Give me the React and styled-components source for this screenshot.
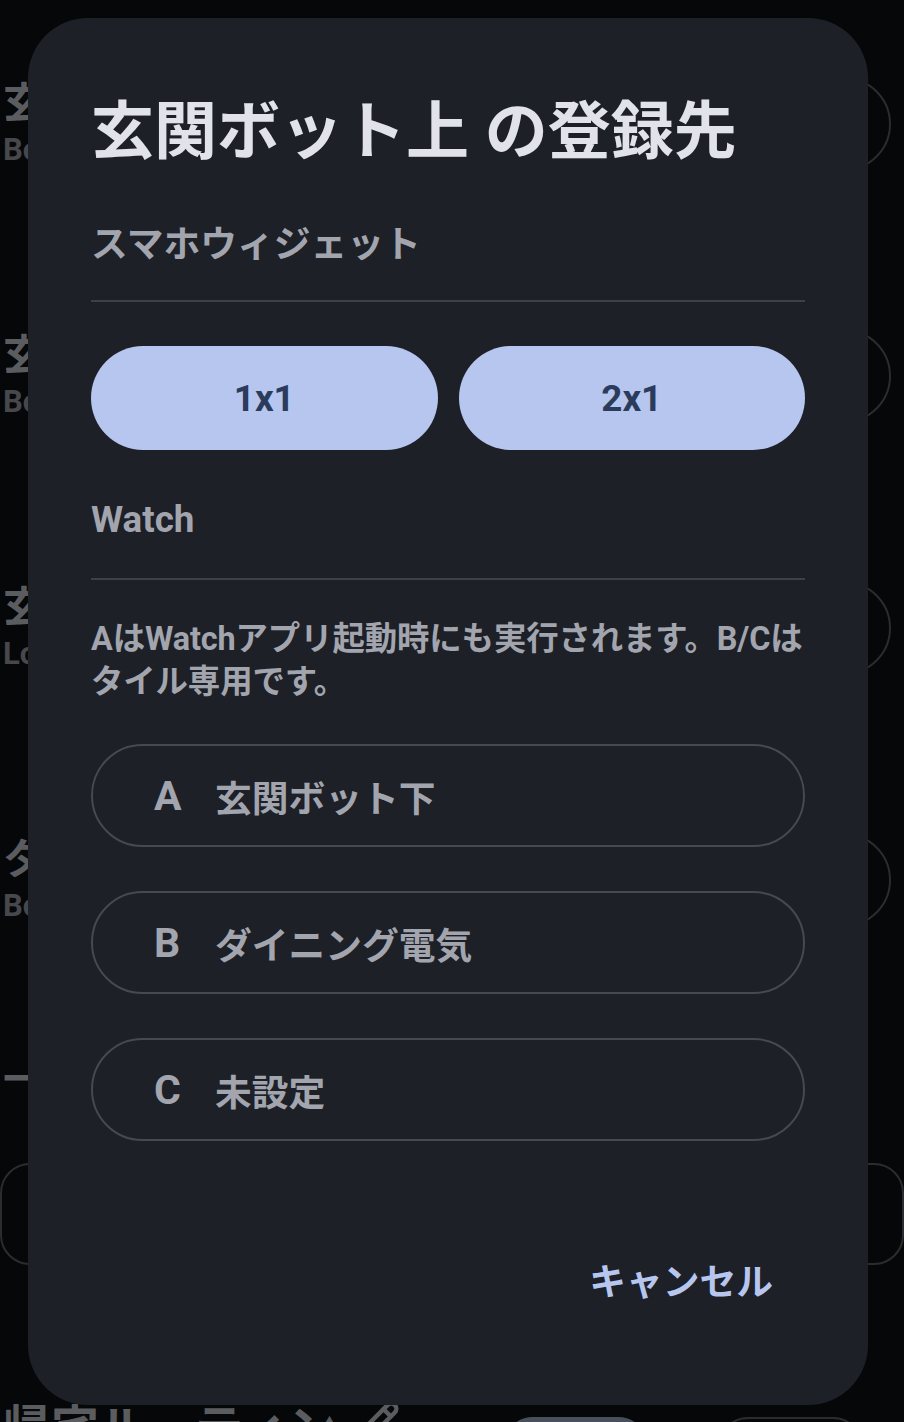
import styled, { createGlobalStyle } from 'styled-components';
import { Pencil } from 'lucide-react';

const font = `"Roboto", "Noto Sans CJK JP", sans-serif`;

const colors = {
  page: '#060709',
  bgTitle: '#5b5c60',
  bgSub: '#46484c',
  bgLine: '#2a2c31',
  surface: '#1d2027',
  title: '#e2e2ea',
  dim: '#a2a5ae',
  divider: '#3d4048',
  primary: '#b6c6ee',
  onPrimary: '#2b3b5b',
  outline: '#464950',
};

const GlobalStyle = createGlobalStyle`
  html, body {
    margin: 0;
    padding: 0;
    background: ${colors.page};
  }
  * { box-sizing: border-box; }
`;

const devices = [
  { name: '玄関ボット上', sub: 'Bot · 押す' },
  { name: '玄関ボット下', sub: 'Bot · 押す' },
  { name: '玄関ライト', sub: 'Local · 切替' },
  { name: 'タイマー照明', sub: 'Bot · 押す' },
];

const slots = [
  { key: 'A', value: '玄関ボット下' },
  { key: 'B', value: 'ダイニング電気' },
  { key: 'C', value: '未設定' },
];

export default function App() {
  return (
    <>
      <GlobalStyle />
      <Page>
        <DeviceList>
          {devices.map((d) => (
            <DeviceRow key={d.name}>
              <DeviceText>
                <DeviceName>{d.name}</DeviceName>
                <DeviceSub>{d.sub}</DeviceSub>
              </DeviceText>
              <RoundButton />
            </DeviceRow>
          ))}
        </DeviceList>
        <SectionTitle>一括操作</SectionTitle>
        <OutlineCard />
        <RoutineRow>
          <RoutineTitle>帰宅ルーティン</RoutineTitle>
          <PencilWrap>
            <Pencil size={44} strokeWidth={2.4} color={colors.bgTitle} />
          </PencilWrap>
          <Pills>
            <Pill $filled />
            <Pill />
          </Pills>
        </RoutineRow>

        <Overlay>
          <Dialog>
            <Title>玄関ボット上 の登録先</Title>
            <SectionLabel $gap={43}>スマホウィジェット</SectionLabel>
            <Divider $gap={31} />
            <SizeRow>
              <SizeButton>1x1</SizeButton>
              <SizeButton>2x1</SizeButton>
            </SizeRow>
            <SectionLabel $gap={46}>Watch</SectionLabel>
            <Divider $gap={34} />
            <Note>AはWatchアプリ起動時にも実行されます。B/Cはタイル専用です。</Note>
            <SlotList>
              {slots.map((s) => (
                <SlotButton key={s.key}>
                  <SlotKey>{s.key}</SlotKey>
                  <SlotValue>{s.value}</SlotValue>
                </SlotButton>
              ))}
            </SlotList>
            <Actions>
              <TextButton>キャンセル</TextButton>
            </Actions>
          </Dialog>
        </Overlay>
      </Page>
    </>
  );
}

/* ---------- background screen ---------- */

const Page = styled.div`
  position: relative;
  width: 904px;
  height: 1422px;
  overflow: hidden;
  padding: 0 13px 0 3px;
  background: ${colors.page};
  font-family: ${font};
`;

const DeviceList = styled.div`
  display: flex;
  flex-direction: column;
  margin-top: -2px;
`;

const DeviceRow = styled.div`
  display: flex;
  align-items: center;
  justify-content: space-between;
  height: 252px;
`;

const DeviceText = styled.div`
  display: flex;
  flex-direction: column;
`;

const DeviceName = styled.div`
  font-size: 42px;
  line-height: 52px;
  font-weight: 700;
  color: ${colors.bgTitle};
`;

const DeviceSub = styled.div`
  font-size: 31px;
  line-height: 40px;
  font-weight: 700;
  color: ${colors.bgSub};
`;

const RoundButton = styled.div`
  width: 94px;
  height: 94px;
  border-radius: 50%;
  border: 2px solid ${colors.bgLine};
`;

const SectionTitle = styled.div`
  margin-top: 46px;
  font-size: 42px;
  line-height: 56px;
  font-weight: 700;
  color: ${colors.bgTitle};
`;

const OutlineCard = styled.div`
  margin: 55px -13px 0 -3px;
  height: 102px;
  border: 2px solid ${colors.bgLine};
  border-radius: 30px;
`;

const RoutineRow = styled.div`
  display: flex;
  align-items: flex-start;
  margin-top: 135px;
`;

const RoutineTitle = styled.div`
  font-size: 48px;
  line-height: 58px;
  font-weight: 700;
  color: ${colors.bgTitle};
`;

const PencilWrap = styled.div`
  margin: 0 0 0 20px;
  display: flex;
`;

const Pills = styled.div`
  display: flex;
  gap: 70px;
  margin: 17px 28px 0 auto;
`;

const Pill = styled.div`
  width: 145px;
  height: 60px;
  border-radius: 30px;
  background: ${(p) => (p.$filled ? '#4a4f5d' : 'transparent')};
  border: 2px solid ${(p) => (p.$filled ? '#4a4f5d' : colors.bgLine)};
`;

/* ---------- dialog ---------- */

const Overlay = styled.div`
  position: absolute;
  inset: 0;
  display: flex;
  padding: 18px 36px 17px 28px;
`;

const Dialog = styled.div`
  flex: 1;
  display: flex;
  flex-direction: column;
  background: ${colors.surface};
  border-radius: 60px;
  padding: 68px 63px 74px;
`;

const Title = styled.h1`
  margin: 0;
  font-size: 63px;
  line-height: 92px;
  font-weight: 700;
  color: ${colors.title};
  white-space: nowrap;
`;

const SectionLabel = styled.div`
  margin-top: ${(p) => p.$gap}px;
  font-size: 36.75px;
  line-height: 48px;
  font-weight: 700;
  color: ${colors.dim};
`;

const Divider = styled.div`
  margin-top: ${(p) => p.$gap}px;
  height: 2px;
  background: ${colors.divider};
`;

const SizeRow = styled.div`
  display: grid;
  grid-template-columns: 1fr 1fr;
  gap: 21px;
  margin-top: 44px;
`;

const SizeButton = styled.div`
  height: 104px;
  border-radius: 52px;
  background: ${colors.primary};
  color: ${colors.onPrimary};
  display: flex;
  align-items: center;
  justify-content: center;
  font-size: 36.75px;
  font-weight: 700;
`;

const Note = styled.p`
  margin: 38px 0 0;
  font-size: 32.4px;
  line-height: 43px;
  letter-spacing: -0.1px;
  font-weight: 700;
  color: ${colors.dim};
`;

const SlotList = styled.div`
  display: flex;
  flex-direction: column;
  gap: 44px;
  margin-top: 40px;
`;

const SlotButton = styled.div`
  height: 103px;
  border-radius: 52px;
  border: 2.5px solid ${colors.outline};
  display: flex;
  align-items: center;
  padding-left: 61px;
  color: ${colors.dim};
  font-weight: 700;
`;

const SlotKey = styled.span`
  font-size: 41px;
  width: 61px;
`;

const SlotValue = styled.span`
  font-size: 36.75px;
`;

const Actions = styled.div`
  margin-top: auto;
  display: flex;
  justify-content: flex-end;
`;

const TextButton = styled.div`
  height: 104px;
  padding: 0 32px;
  display: flex;
  align-items: center;
  font-size: 36.75px;
  font-weight: 700;
  color: ${colors.primary};
`;
